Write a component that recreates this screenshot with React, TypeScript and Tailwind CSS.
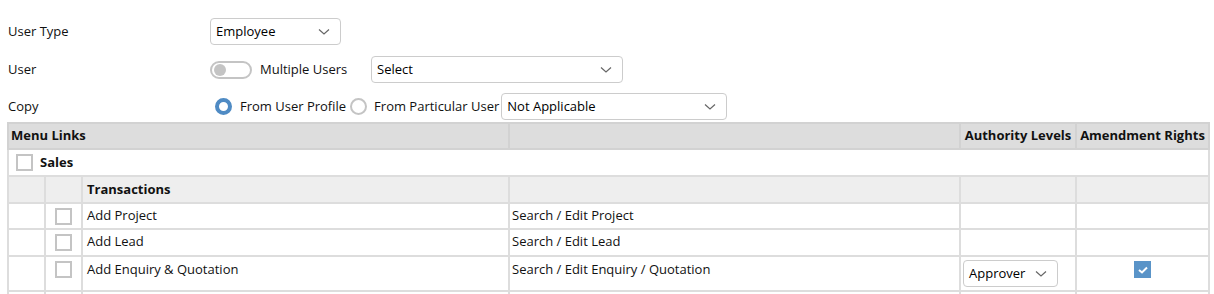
import React from "react";

const Chevron = () => (
  <svg width="12" height="8" viewBox="0 0 12 8" className="shrink-0">
    <path d="M1 1.5 L6 6 L11 1.5" fill="none" stroke="#666" strokeWidth="1.2" />
  </svg>
);

const Select = ({ text, w, h = 27 }: { text: string; w: number; h?: number }) => (
  <div
    className="flex items-center justify-between border border-[#cccccc] rounded-[4px] bg-white pl-[5px] pr-[10px] text-[13px] text-black"
    style={{ width: w, height: h }}
  >
    <span>{text}</span>
    <Chevron />
  </div>
);

const Box = () => (
  <div className="w-[17px] h-[17px] border-2 border-[#c4c4c4] bg-white" />
);

export default function App() {
  const cell = "border-2 border-[#dddddd] px-[3px] align-middle";
  const hcell = "border-2 border-[#d2d2d2] px-[3px] align-middle";
  return (
    <div
      className="w-[1214px] h-[294px] overflow-hidden bg-white text-[13px] text-[#111]"
      style={{ fontFamily: '"Open Sans", "Noto Sans", sans-serif' }}
    >
      <div className="pt-[18px]">
        <div className="flex items-center h-[27px]">
          <div className="w-[210px] pl-[8px]">User Type</div>
          <Select text="Employee" w={131} />
        </div>
        <div className="flex items-center h-[27px] mt-[11px]">
          <div className="w-[210px] pl-[8px]">User</div>
          <div className="w-[42px] h-[18px] rounded-full border-2 border-[#c4c4c4] flex items-center pl-[2px]">
            <div className="w-[12px] h-[12px] rounded-full bg-[#c4c4c4]" />
          </div>
          <span className="ml-[8px] w-[111px]">Multiple Users</span>
          <Select text="Select" w={252} />
        </div>
        <div className="flex items-center h-[27px] mt-[10px]">
          <div className="w-[215px] pl-[8px]">Copy</div>
          <div className="w-[17px] h-[17px] rounded-full border-[4px] border-[#4f8bc4] bg-white" />
          <span className="ml-[8px]">From User Profile</span>
          <div className="ml-[4px] w-[17px] h-[17px] rounded-full border-2 border-[#c4c4c4] bg-white" />
          <span className="ml-[7px]">From Particular User</span>
          <div className="ml-[2px]">
            <Select text="Not Applicable" w={226} />
          </div>
        </div>
      </div>
      <table className="ml-[7px] mt-[2px] border-collapse w-[1202px] table-fixed">
        <colgroup>
          <col style={{ width: 37 }} />
          <col style={{ width: 37 }} />
          <col style={{ width: 427 }} />
          <col style={{ width: 451 }} />
          <col style={{ width: 116 }} />
          <col style={{ width: 133 }} />
        </colgroup>
        <tbody>
          <tr className="h-[26px] bg-[#dddddd] font-bold">
            <td colSpan={3} className={hcell + " pl-[2px]"}>Menu Links</td>
            <td className={hcell}></td>
            <td className={hcell + " text-center whitespace-nowrap px-0"}>Authority Levels</td>
            <td className={hcell + " text-center whitespace-nowrap px-0"}>Amendment Rights</td>
          </tr>
          <tr className="h-[27px] bg-white font-bold">
            <td colSpan={6} className={cell + " pl-[7px]"}>
              <div className="flex items-center gap-[7px]">
                <Box />
                <span>Sales</span>
              </div>
            </td>
          </tr>
          <tr className="h-[27px] bg-[#eeeeee] font-bold">
            <td className={cell}></td>
            <td className={cell}></td>
            <td className={cell + " pl-[4px]"}>Transactions</td>
            <td className={cell}></td>
            <td className={cell}></td>
            <td className={cell}></td>
          </tr>
          {[
            ["Add Project", "Search / Edit Project", 26],
            ["Add Lead", "Search / Edit Lead", 27],
          ].map(([a, b, h]) => (
            <tr key={a as string} className="bg-white" style={{ height: h as number }}>
              <td className={cell}></td>
              <td className={cell}>
                <div className="flex justify-center"><Box /></div>
              </td>
              <td className={cell + " pb-[1px] pl-[4px]"}>{a}</td>
              <td className={cell + " pb-[1px] pl-[2px]"}>{b}</td>
              <td className={cell}></td>
              <td className={cell}></td>
            </tr>
          ))}
          <tr className="h-[35px] bg-white">
            <td className={cell}></td>
            <td className={cell + " align-top pt-[4px]"}>
              <div className="flex justify-center"><Box /></div>
            </td>
            <td className={cell + " align-top pt-[3px] pl-[4px]"}>Add Enquiry &amp; Quotation</td>
            <td className={cell + " align-top pt-[3px] pl-[2px]"}>Search / Edit Enquiry / Quotation</td>
            <td className={cell + " pl-[2px]"}>
              <Select text="Approver" w={95} h={27} />
            </td>
            <td className={cell + " align-top pt-[4px]"}>
              <div className="flex justify-center">
                <div className="w-[17px] h-[17px] bg-[#5a94c8] flex items-center justify-center">
                  <svg width="10" height="8" viewBox="0 0 10 8">
                    <path d="M1 4 L4 6.5 L9 1.5" fill="none" stroke="#fff" strokeWidth="2" />
                  </svg>
                </div>
              </div>
            </td>
          </tr>
          <tr className="h-[10px] bg-white">
            <td className={cell}></td>
            <td className={cell}></td>
            <td className={cell}></td>
            <td className={cell}></td>
            <td className={cell}></td>
            <td className={cell}></td>
          </tr>
        </tbody>
      </table>
    </div>
  );
}
